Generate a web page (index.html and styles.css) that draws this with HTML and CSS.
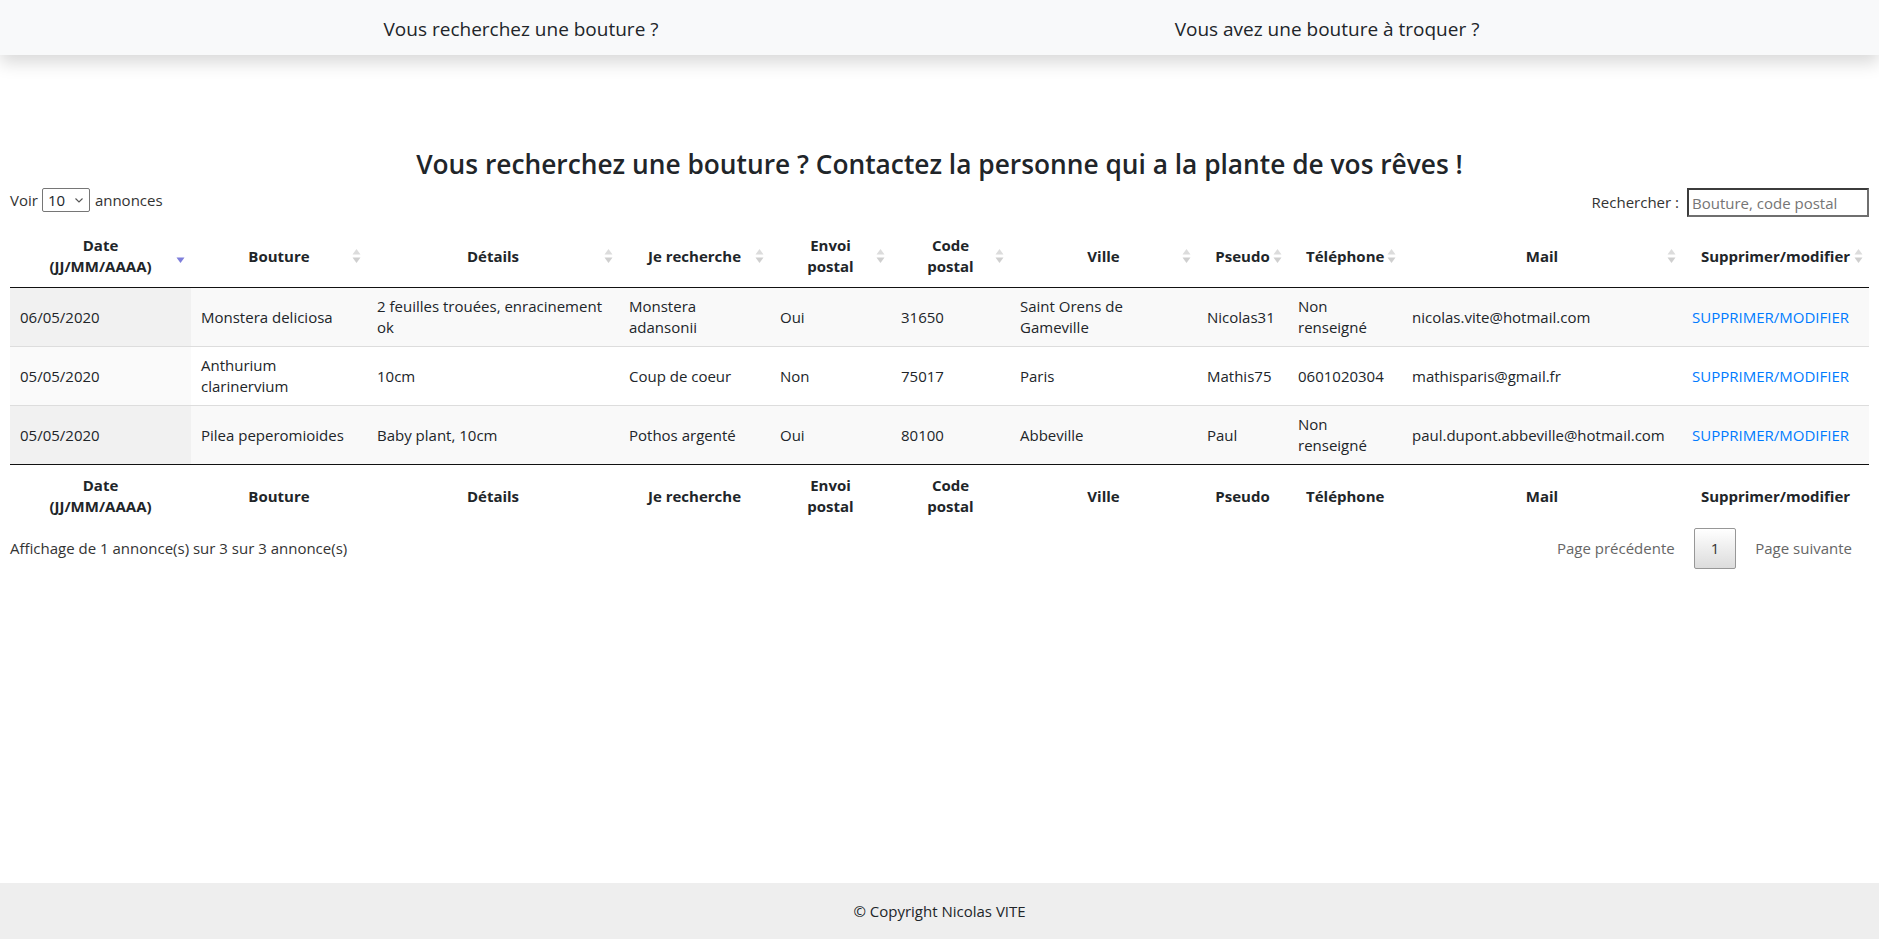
FILE: index.html
```html
<!DOCTYPE html>
<html lang="fr">
<head>
<meta charset="utf-8">
<title>Boutures</title>
<link rel="stylesheet" href="styles.css">
</head>
<body>
<nav class="topnav">
  <div class="topnav-inner">
    <a class="topnav-link" href="#">Vous recherchez une bouture ?</a>
    <a class="topnav-link" href="#">Vous avez une bouture à troquer ?</a>
  </div>
</nav>

<main class="page">
  <h2 class="title">Vous recherchez une bouture ? Contactez la personne qui a la plante de vos rêves !</h2>

  <div class="dt-top">
    <label class="dt-length">Voir
      <span class="select-wrap">
        <select class="dt-select"><option>10</option><option>25</option><option>50</option><option>100</option></select>
        <svg class="select-arrow" width="8" height="5" viewBox="0 0 8 5"><polyline points="0.5,0.5 4,4 7.5,0.5" fill="none" stroke="#555" stroke-width="1.1"/></svg>
      </span>
      annonces</label>
    <label class="dt-filter">Rechercher :<input class="dt-input" type="search" placeholder="Bouture, code postal"></label>
  </div>

  <table class="dt">
    <colgroup>
      <col class="c-date"><col class="c-bouture"><col class="c-details"><col class="c-recherche"><col class="c-envoi"><col class="c-code"><col class="c-ville"><col class="c-pseudo"><col class="c-tel"><col class="c-mail"><col class="c-action">
    </colgroup>
    <thead>
      <tr>
        <th>Date<br>(JJ/MM/AAAA)<svg class="sort-icon" width="9" height="16" viewBox="0 0 9 16"><path d="M0.5 9.5 H8.5 L4.5 15 Z" fill="#7e7edb"/></svg></th>
        <th>Bouture<svg class="sort-icon" width="9" height="16" viewBox="0 0 9 16"><path d="M4.5 1 L8.5 6.5 H0.5 Z" fill="#dcdcdc"/><path d="M0.5 9.5 H8.5 L4.5 15 Z" fill="#cfcfcf"/></svg></th>
        <th>Détails<svg class="sort-icon" width="9" height="16" viewBox="0 0 9 16"><path d="M4.5 1 L8.5 6.5 H0.5 Z" fill="#dcdcdc"/><path d="M0.5 9.5 H8.5 L4.5 15 Z" fill="#cfcfcf"/></svg></th>
        <th>Je recherche<svg class="sort-icon" width="9" height="16" viewBox="0 0 9 16"><path d="M4.5 1 L8.5 6.5 H0.5 Z" fill="#dcdcdc"/><path d="M0.5 9.5 H8.5 L4.5 15 Z" fill="#cfcfcf"/></svg></th>
        <th>Envoi<br>postal<svg class="sort-icon" width="9" height="16" viewBox="0 0 9 16"><path d="M4.5 1 L8.5 6.5 H0.5 Z" fill="#dcdcdc"/><path d="M0.5 9.5 H8.5 L4.5 15 Z" fill="#cfcfcf"/></svg></th>
        <th>Code<br>postal<svg class="sort-icon" width="9" height="16" viewBox="0 0 9 16"><path d="M4.5 1 L8.5 6.5 H0.5 Z" fill="#dcdcdc"/><path d="M0.5 9.5 H8.5 L4.5 15 Z" fill="#cfcfcf"/></svg></th>
        <th>Ville<svg class="sort-icon" width="9" height="16" viewBox="0 0 9 16"><path d="M4.5 1 L8.5 6.5 H0.5 Z" fill="#dcdcdc"/><path d="M0.5 9.5 H8.5 L4.5 15 Z" fill="#cfcfcf"/></svg></th>
        <th>Pseudo<svg class="sort-icon" width="9" height="16" viewBox="0 0 9 16"><path d="M4.5 1 L8.5 6.5 H0.5 Z" fill="#dcdcdc"/><path d="M0.5 9.5 H8.5 L4.5 15 Z" fill="#cfcfcf"/></svg></th>
        <th>Téléphone<svg class="sort-icon" width="9" height="16" viewBox="0 0 9 16"><path d="M4.5 1 L8.5 6.5 H0.5 Z" fill="#dcdcdc"/><path d="M0.5 9.5 H8.5 L4.5 15 Z" fill="#cfcfcf"/></svg></th>
        <th>Mail<svg class="sort-icon" width="9" height="16" viewBox="0 0 9 16"><path d="M4.5 1 L8.5 6.5 H0.5 Z" fill="#dcdcdc"/><path d="M0.5 9.5 H8.5 L4.5 15 Z" fill="#cfcfcf"/></svg></th>
        <th>Supprimer/modifier<svg class="sort-icon" width="9" height="16" viewBox="0 0 9 16"><path d="M4.5 1 L8.5 6.5 H0.5 Z" fill="#dcdcdc"/><path d="M0.5 9.5 H8.5 L4.5 15 Z" fill="#cfcfcf"/></svg></th>
      </tr>
    </thead>
    <tbody>
      <tr>
        <td class="sorted">06/05/2020</td>
        <td>Monstera deliciosa</td>
        <td>2 feuilles trouées, enracinement ok</td>
        <td>Monstera adansonii</td>
        <td>Oui</td>
        <td>31650</td>
        <td>Saint Orens de Gameville</td>
        <td>Nicolas31</td>
        <td>Non renseigné</td>
        <td class="nowrap">nicolas.vite@hotmail.com</td>
        <td class="nowrap"><a class="action-link" href="#">SUPPRIMER/MODIFIER</a></td>
      </tr>
      <tr>
        <td class="sorted">05/05/2020</td>
        <td>Anthurium clarinervium</td>
        <td>10cm</td>
        <td>Coup de coeur</td>
        <td>Non</td>
        <td>75017</td>
        <td>Paris</td>
        <td>Mathis75</td>
        <td>0601020304</td>
        <td class="nowrap">mathisparis@gmail.fr</td>
        <td class="nowrap"><a class="action-link" href="#">SUPPRIMER/MODIFIER</a></td>
      </tr>
      <tr>
        <td class="sorted">05/05/2020</td>
        <td>Pilea peperomioides</td>
        <td>Baby plant, 10cm</td>
        <td>Pothos argenté</td>
        <td>Oui</td>
        <td>80100</td>
        <td>Abbeville</td>
        <td>Paul</td>
        <td>Non renseigné</td>
        <td class="nowrap">paul.dupont.abbeville@hotmail.com</td>
        <td class="nowrap"><a class="action-link" href="#">SUPPRIMER/MODIFIER</a></td>
      </tr>
    </tbody>
    <tfoot>
      <tr>
        <th>Date<br>(JJ/MM/AAAA)</th>
        <th>Bouture</th>
        <th>Détails</th>
        <th>Je recherche</th>
        <th>Envoi<br>postal</th>
        <th>Code<br>postal</th>
        <th>Ville</th>
        <th>Pseudo</th>
        <th>Téléphone</th>
        <th>Mail</th>
        <th>Supprimer/modifier</th>
      </tr>
    </tfoot>
  </table>

  <div class="dt-bottom">
    <div class="dt-info">Affichage de 1 annonce(s) sur 3 sur 3 annonce(s)</div>
    <div class="dt-paginate">
      <span class="pg">Page précédente</span>
      <span class="pg pg-current">1</span>
      <span class="pg">Page suivante</span>
    </div>
  </div>
</main>

<footer class="site-footer">© Copyright Nicolas VITE</footer>
</body>
</html>
```

FILE: styles.css
```css
* {
  box-sizing: border-box;
}

body {
  margin: 0;
  min-height: 100vh;
  display: flex;
  flex-direction: column;
  font-family: "Open Sans", "Noto Sans", sans-serif;
  font-size: 15px;
  line-height: 21px;
  color: #212529;
  background: #fff;
}

/* Top navigation */
.topnav {
  height: 55px;
  background: #f8f9fa;
  box-shadow: 0 8px 16px rgba(0, 0, 0, 0.15);
}

.topnav-inner {
  display: grid;
  grid-template-columns: 1fr 1fr;
  align-items: center;
  width: 1612px;
  height: 100%;
  margin-left: 118px;
}

.topnav-link {
  text-align: center;
  font-size: 19px;
  line-height: 24px;
  padding-top: 3px;
  color: #212529;
  text-decoration: none;
}

/* Page */
.page {
  flex: 1 0 auto;
  padding: 0 10px;
}

.title {
  margin: 93px 0 0;
  font-size: 26.3px;
  font-weight: 600;
  line-height: 32px;
  text-align: center;
  color: #212529;
}

.dt-top {
  display: flex;
  justify-content: space-between;
  align-items: flex-start;
  margin-top: 8px;
  color: #333;
}

.dt-length {
  display: flex;
  align-items: center;
  height: 24px;
}

.select-wrap {
  position: relative;
  display: inline-block;
  height: 24px;
  margin: 0 5px 0 4px;
}

.dt-select {
  appearance: none;
  -webkit-appearance: none;
  width: 48px;
  height: 24px;
  border: 1px solid #767676;
  border-radius: 2px;
  background: #fff;
  font-family: inherit;
  font-size: 15px;
  color: #212529;
  padding: 0 0 0 5px;
  margin: 0;
}

.select-arrow {
  position: absolute;
  right: 7px;
  top: 10px;
  pointer-events: none;
}

.dt-filter {
  display: flex;
  align-items: center;
  height: 29px;
}

.dt-input {
  width: 182px;
  height: 29px;
  margin: 0 0 0 8px;
  padding: 0 3px;
  border: 2px solid;
  border-color: #3c3c3c #6f6f6f #6f6f6f #3c3c3c;
  font-family: inherit;
  font-size: 15px;
  color: #212529;
  background: #fff;
}

.dt-input::placeholder {
  color: #757575;
}

/* Table */
.dt {
  width: 100%;
  margin-top: 8px;
  border-collapse: separate;
  border-spacing: 0;
  table-layout: fixed;
}

.c-date { width: 181px; }
.c-bouture { width: 176px; }
.c-details { width: 252px; }
.c-recherche { width: 151px; }
.c-envoi { width: 121px; }
.c-code { width: 119px; }
.c-ville { width: 187px; }
.c-pseudo { width: 91px; }
.c-tel { width: 114px; }
.c-mail { width: 280px; }
.c-action { width: 187px; }

.dt th {
  position: relative;
  padding: 10px 18px;
  font-weight: 700;
  text-align: center;
  vertical-align: middle;
  white-space: nowrap;
  color: #212529;
}

.dt thead th {
  border-bottom: 1px solid #111;
}

.dt tfoot th {
  border-top: 1px solid #111;
  padding: 10px 18px 6px;
}

.sort-icon {
  position: absolute;
  right: 6px;
  top: 50%;
  margin-top: -8px;
}

.dt td {
  padding: 8px 10px;
  vertical-align: middle;
  color: #212529;
}

.dt tbody tr + tr td {
  border-top: 1px solid #ddd;
}

.dt tbody tr:nth-child(odd) {
  background: #f9f9f9;
}

.dt tbody tr:nth-child(odd) td.sorted {
  background: #f1f1f1;
}

.dt tbody tr:nth-child(even) td.sorted {
  background: #fafafa;
}

.nowrap {
  white-space: nowrap;
}

.action-link {
  color: #007bff;
  text-decoration: none;
}

/* Bottom of table */
.dt-bottom {
  display: flex;
  justify-content: space-between;
  align-items: center;
  margin-top: 5px;
  color: #333;
}

.dt-paginate {
  display: flex;
  align-items: center;
}

.pg {
  margin-left: 2px;
  padding: 9px 16px;
  border: 1px solid transparent;
  border-radius: 2px;
  line-height: 21px;
  color: #666;
}

.pg-current {
  color: #333;
  border-color: #979797;
  background: linear-gradient(to bottom, #fff 0%, #dcdcdc 100%);
}

/* Footer */
.site-footer {
  height: 56px;
  display: flex;
  align-items: center;
  justify-content: center;
  background: #eee;
  color: #212529;
}
```
